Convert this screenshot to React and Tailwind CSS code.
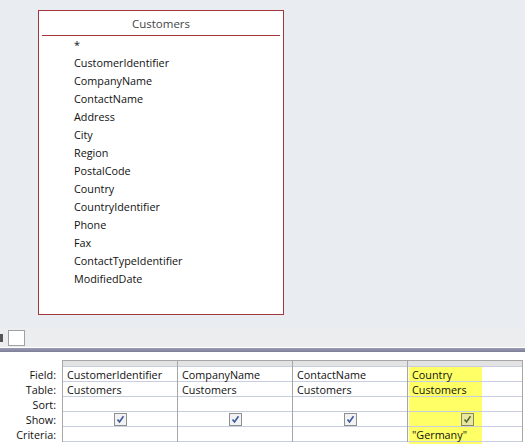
import React from 'react';

const fields = [
    '*',
    'CustomerIdentifier',
    'CompanyName',
    'ContactName',
    'Address',
    'City',
    'Region',
    'PostalCode',
    'Country',
    'CountryIdentifier',
    'Phone',
    'Fax',
    'ContactTypeIdentifier',
    'ModifiedDate',
];

const columns = [
    { field: 'CustomerIdentifier', table: 'Customers', criteria: '' },
    { field: 'CompanyName', table: 'Customers', criteria: '' },
    { field: 'ContactName', table: 'Customers', criteria: '' },
    { field: 'Country', table: 'Customers', criteria: '"Germany"', hot: true },
];

const labels = ['Field:', 'Table:', 'Sort:', 'Show:', 'Criteria:'];

const Check = ({ hot }) => (
    <span className={`flex h-[13px] w-[13px] items-center justify-center border ${hot ? 'border-[#8a8a60] bg-[#e8e8a0]' : 'border-[#8e8f8f] bg-[#f2f2f5]'}`}>
        <svg width="9" height="9" viewBox="0 0 9 9">
            <path d="M1.5 4.5 L3.5 7 L7.5 1.2" fill="none" stroke={hot ? '#556b2f' : '#3b5998'} strokeWidth="1.6" />
        </svg>
    </span>
);

const GridColumn = ({ col }) => {
    const cell = 'h-[15px] border-b border-[#c9cde0] px-[4px] leading-[16px] whitespace-nowrap';
    return (
        <div className="flex w-[115px] shrink-0 flex-col border-r border-[#a6a6a6]">
            <div className="h-[6px] border-b border-[#c9cde0] bg-[#e3e3e3]"></div>
            <div className="relative">
                {col.hot && <div className="absolute left-[1px] top-0 h-[80px] w-[73px] bg-[#ffff66]"></div>}
                <div className="relative">
                    <div className={cell}>{col.field}</div>
                    <div className={cell}>{col.table}</div>
                    <div className={cell}></div>
                    <div className={`${cell} flex items-center ${col.hot ? 'justify-start pl-[53px]' : 'justify-center'}`}>
                        <Check hot={col.hot} />
                    </div>
                    <div className={cell}>{col.criteria}</div>
                </div>
            </div>
        </div>
    );
};

const App = () => {
    return (
        <div className="h-[444px] w-[525px] overflow-hidden bg-white text-[10.8px] text-[#111]" style={{ fontFamily: '"Open Sans", "Noto Sans", sans-serif' }}>
            <div className="h-[328px] bg-[#e9edf1] pl-[38px] pt-[10px]">
                <div className="h-[305px] w-[246px] border border-[#a4373a] bg-white">
                    <div className="mx-[3px] flex h-[25px] items-center justify-center border-b border-[#a4373a] pt-[1px] text-[11.5px] text-[#444]">
                        Customers
                    </div>
                    <div className="pl-[35px] pt-[0px]">
                        {fields.map((f) => (
                            <div key={f} className="h-[18px] leading-[18px]">{f}</div>
                        ))}
                    </div>
                </div>
            </div>
            <div className="flex h-[19px] items-center bg-[#ebedef]">
                <div className="h-[8px] w-[3px] bg-[#555]"></div>
                <div className="ml-[5px] h-[16px] w-[17px] border border-[#a0a0a0] bg-white"></div>
            </div>
            <div className="h-[1px] bg-white"></div>
            <div className="h-[4px] bg-gradient-to-b from-[#9c9cb4] to-[#7d7d98]"></div>
            <div className="flex pt-[8px]">
                <div className="w-[62px] shrink-0 pr-[6px] pt-[7px] text-right">
                    {labels.map((l) => (
                        <div key={l} className="h-[15px] leading-[16px]">{l}</div>
                    ))}
                </div>
                <div className="flex border-l border-t border-[#a6a6a6]">
                    {columns.map((c) => (
                        <GridColumn key={c.field} col={c} />
                    ))}
                </div>
            </div>
        </div>
    );
};

export default App;
